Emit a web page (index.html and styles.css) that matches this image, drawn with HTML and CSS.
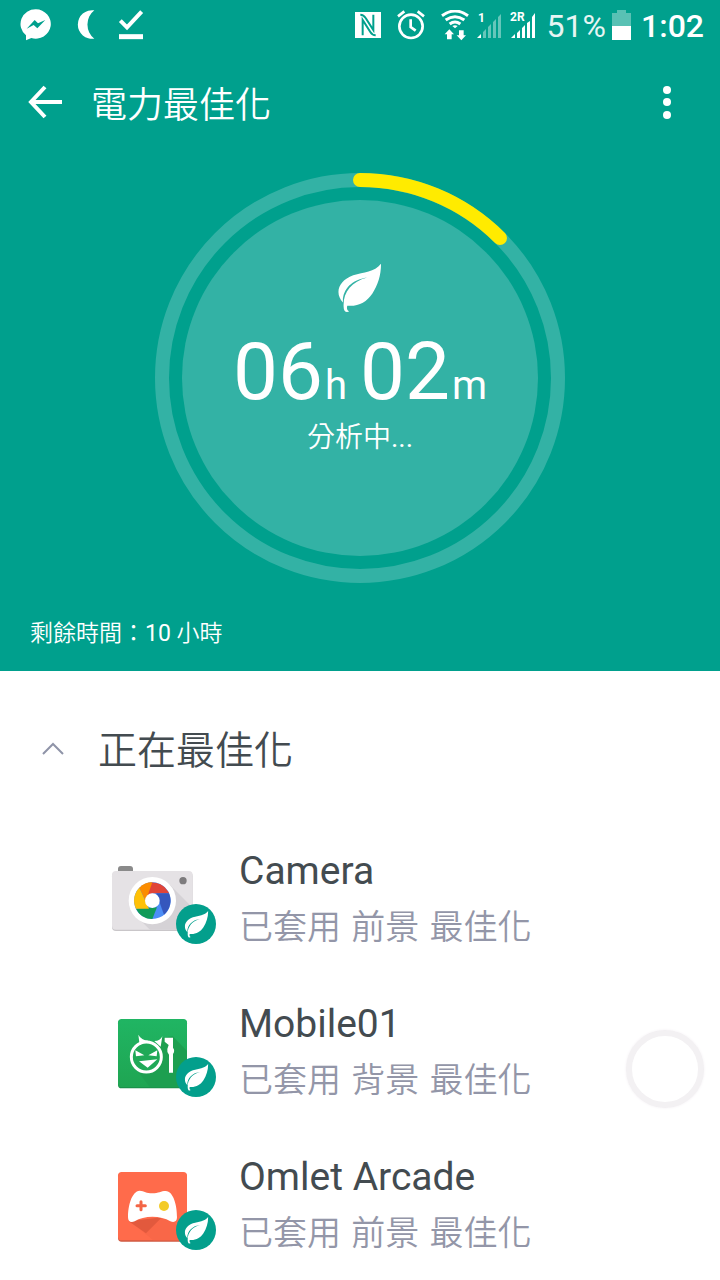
FILE: index.html
```html
<!DOCTYPE html>
<html lang="zh-Hant">
<head>
<meta charset="utf-8">
<meta name="viewport" content="width=device-width, initial-scale=1">
<title>電力最佳化</title>
<link rel="stylesheet" href="styles.css">
</head>
<body>
<svg class="defs" aria-hidden="true">
  <symbol id="leaf" viewBox="355 38 131 151">
    <path d="M484 40C464 66 432 65 400 75C355 91 343 130 369 157C367 119 394 89 442 82C394 95 369 127 371 169C371 184 379 190 388 184C381 181 380 176 382 167C415 170 440 157 458 130C474 104 484 76 484 40Z"/>
  </symbol>
  <symbol id="badge" viewBox="0 0 120 120">
    <circle cx="60" cy="60" r="60" fill="#039f8c"/>
    <use href="#leaf" x="25" y="20" width="74" height="82" fill="#fff"/>
  </symbol>
</svg>

<header class="hero">
  <div class="status">
    <div class="status-group notices">
      <svg width="32" height="32" viewBox="0 0 96 96" fill="#fff"><path d="M48 1A45 44 0 1 1 34 87L18 94V79A45 44 0 0 1 48 1Z"/><path d="M20 59L44 33L54 43L76 33L52 58L41 48Z" fill="#00a08d"/></svg>
      <svg width="20" height="30" viewBox="0 0 60 90" fill="#fff"><path d="M58 1A43 43 0 1 0 58 86A54 54 0 0 1 58 1Z"/></svg>
      <svg width="26" height="30" viewBox="0 0 78 90" fill="none" stroke="#fff"><path d="M7 32L27 52L71 5" stroke-width="12"/><path d="M3 80H75" stroke-width="15"/></svg>
    </div>
    <div class="status-group system">
      <svg width="26" height="26" viewBox="0 0 78 78"><path fill="#fff" d="M0 0H78V78H0Z"/><path d="M23 70V24L46 60Q52 70 62 70M55 8V54L32 18Q26 8 16 8" fill="none" stroke="#00a08d" stroke-width="6"/></svg>
      <svg class="alarm" width="28" height="30" viewBox="0 0 84 90" fill="none" stroke="#fff" stroke-width="8"><circle cx="42" cy="49" r="35"/><path d="M41 28V51L56 62M3 19L22 4M62 4L81 19"/></svg>
      <svg class="wifi" width="28" height="31" viewBox="0 0 84 93" fill="none" stroke="#fff" stroke-width="9"><path d="M3 17Q42-11 81 17M14 30Q42 10 70 30M26 42Q42 30 58 42"/><path d="M34 48Q42 43 50 48L42 55ZM25 58L39 73H32V88H18V73H11ZM61 91L47 76H54V61H68V76H75Z" fill="#fff" stroke="none"/></svg>
      <svg class="signal" width="26" height="30" viewBox="0 0 26 30" fill="#fff"><text class="sim" x="2" y="12">1</text><path d="M1 28L5 24V28Z"/><path opacity=".4" d="M7 22L10 19V28H7ZM12 17L15 14V28H12ZM17 12L20 9V28H17ZM22 7L25 4V28H22Z"/></svg>
      <svg class="signal two" width="28" height="30" viewBox="0 0 28 30" fill="#fff"><text class="sim" x="0" y="11">2R</text><path d="M1 28L5 24V28ZM7 23L10 20V28H7ZM12 18L15 15V28H12ZM17 13L20 11V28H17ZM22 7L25 3V28H22Z"/></svg>
      <span class="percent">51%</span>
      <svg width="19" height="30" viewBox="0 0 19 30" fill="#fff"><path opacity=".35" d="M0 3H5V0H14V3H19V16H0Z"/><path d="M0 16H19V30H0Z"/></svg>
      <time class="clock">1:02</time>
    </div>
  </div>

  <nav class="appbar">
    <button class="icon-button" aria-label="返回"><svg width="36" height="36" viewBox="0 0 36 36" fill="none" stroke="#fff" stroke-width="4"><path d="M18 3L4 18L18 33M4 18H35"/></svg></button>
    <h1>電力最佳化</h1>
    <button class="icon-button" aria-label="更多選項"><svg width="12" height="36" viewBox="0 0 12 36" fill="#fff"><circle cx="6" cy="6" r="4"/><circle cx="6" cy="18" r="4"/><circle cx="6" cy="31" r="4"/></svg></button>
  </nav>

  <section class="gauge">
    <svg class="ring" width="410" height="410" viewBox="0 0 410 410" fill="none">
      <circle cx="205" cy="205" r="198" stroke="#33b2a5" stroke-width="14"/>
      <circle cx="205" cy="205" r="178" fill="#33b2a5"/>
      <path d="M205 7A198 198 0 0 1 345 65" stroke="#ffeb00" stroke-width="14" stroke-linecap="round"/>
    </svg>
    <div class="reading">
      <svg class="leaf" width="44" height="50" fill="#fff"><use href="#leaf"/></svg>
      <p class="duration"><span>06</span><small>h</small><span class="minutes">02</span><small>m</small></p>
      <p class="state">分析中<span class="latin">...</span></p>
    </div>
  </section>
  <p class="remaining">剩餘時間：<span class="latin">10</span> 小時</p>
</header>

<main class="content">
  <h2><button class="group-toggle" aria-expanded="true">
    <svg width="22" height="18" viewBox="0 0 22 18" fill="none" stroke="#8f94a8" stroke-width="2"><path d="M1 12L11 2L21 12"/></svg>
    <span>正在最佳化</span>
  </button></h2>
  <ul class="apps">
    <li class="app">
      <svg width="130" height="110" viewBox="0 0 390 330">
        <path d="M54 66V57Q54 48 63 48H90Q99 48 99 57V66Z" fill="#8a8a8a"/>
        <rect x="36" y="67" width="242" height="176" rx="12" fill="#c9c6c9"/>
        <rect x="36" y="63" width="242" height="176" rx="12" fill="#e5e2e5"/>
        <path d="M205 100L278 173V239H150L110 200Z" fill="#d5d2d6"/>
        <circle cx="249" cy="92" r="11" fill="#7d7b7d"/>
        <circle cx="157" cy="152" r="71" fill="#fff"/>
        <g transform="translate(157 152)">
          <circle r="55" fill="#4c8df6"/>
          <path d="M-8-54A55 55 0 0 1 48-27L50-22H0L-25-10Z" fill="#e04438"/>
          <path d="M50-22A55 55 0 0 1 35 42L12-22Z" fill="#3557bd"/>
          <path d="M0 55A55 55 0 0 1-49 24L14 20Z" fill="#109b58"/>
          <path d="M-49 24A55 55 0 0 1-39-39L-10 24Z" fill="#ffc107"/>
          <path d="M-39-39A55 55 0 0 1 0-55L-20 2Z" fill="#fb8c00"/>
          <circle r="22" fill="#fff"/>
        </g>
        <use href="#badge" x="228" y="162" width="120" height="120"/>
      </svg>
      <div class="app-text"><h3>Camera</h3><p>已套用 <span class="mode">前景</span> 最佳化</p></div>
    </li>
    <li class="app">
      <svg width="130" height="110" viewBox="0 -6 390 330">
        <linearGradient id="green" x1="0" y1="0" x2="0" y2="1"><stop stop-color="#20b563"/><stop offset="1" stop-color="#1fa552"/></linearGradient>
        <rect x="54" y="44" width="207" height="206" rx="11" fill="#198b47"/>
        <rect x="54" y="42" width="207" height="205" rx="11" fill="url(#green)"/>
        <path d="M186 98L218 94L261 138V247H150L105 188Z" fill="#1d9f50"/>
        <circle cx="139" cy="156" r="45" fill="#1fa957" stroke="#fff" stroke-width="9"/>
        <path d="M115 89Q124 106 145 107L119 120ZM187 94Q181 108 163 108L182 125ZM106 136L133 151L108 154ZM172 136L145 151L170 154ZM117 169L172 163L143 188Z" fill="#fff"/>
        <path d="M194 98H219V128Q226 137 219 147V203H207V149Q200 142 202 132L206 120L194 110Z" fill="#fff"/>
        <use href="#badge" x="228" y="156" width="120" height="120"/>
      </svg>
      <div class="app-text"><h3>Mobile01</h3><p>已套用 <span class="mode">背景</span> 最佳化</p></div>
    </li>
    <li class="app">
      <svg width="130" height="110" viewBox="0 -12 390 330">
        <rect x="54" y="39" width="207" height="206" rx="11" fill="#cf5a42"/>
        <rect x="54" y="36" width="207" height="205" rx="11" fill="#ff6b4b"/>
        <path d="M86 180L138 219L190 170L220 185L261 226V241H160Z" fill="#f96748"/>
        <path d="M86 184L138 220L186 172Z" fill="#e2593d"/>
        <path d="M119 92C133 93 139 100 157 100C176 100 183 93 197 93C221 94 231 137 231 172C231 184 223 189 211 184C182 166 132 166 104 184C92 190 84 184 84 172C84 137 95 94 119 92Z" fill="#fff"/>
        <path d="M123 125V149M111 137H136" stroke="#f36545" stroke-width="9" stroke-linecap="round"/>
        <circle cx="192" cy="138" r="15" fill="#f3cb28"/>
        <use href="#badge" x="228" y="150" width="120" height="120"/>
      </svg>
      <div class="app-text"><h3>Omlet Arcade</h3><p>已套用 <span class="mode">前景</span> 最佳化</p></div>
    </li>
  </ul>
</main>
<button class="assist" aria-label="輔助按鈕"></button>
</body>
</html>
```
FILE: styles.css
```css
* { box-sizing: border-box; }

body {
  margin: 0;
  min-height: 100vh;
  background: #fff;
  color: #434b50;
  font-family: Roboto, "Noto Sans CJK TC", sans-serif;
}

h1, h2, h3, p, ul { margin: 0; padding: 0; font-weight: 400; }
ul { list-style: none; }
svg { display: block; flex: none; }
button { border: 0; padding: 0; background: none; color: inherit; font: inherit; }
.defs { position: absolute; width: 0; height: 0; }
.latin { font-weight: 400; }

.hero { background: #00a08d; color: #fff; padding-bottom: 19px; }

.status {
  display: flex;
  justify-content: space-between;
  height: 50px;
  padding: 0 16px 0 20px;
}
.status-group { display: flex; align-items: center; }
.notices { gap: 23px; }
.system { font-size: 32px; line-height: 50px; }
.alarm { margin-left: 16px; }
.wifi { margin-left: 16px; }
.signal { margin-left: 7px; }
.signal.two { margin-left: 8px; }
.sim { font: 700 12px Roboto, sans-serif; }
.percent { margin: 2px 6px 0 9px; opacity: .9; }
.clock { margin: 2px 0 0 10px; font-weight: 500; }

.appbar {
  display: flex;
  align-items: center;
  height: 104px;
  padding: 0 47px 0 27px;
}
.appbar h1 {
  flex: 1;
  margin-left: 28px;
  padding-top: 8px;
  font-size: 36px;
  font-weight: 350;
  line-height: 52px;
}

.gauge {
  display: grid;
  justify-items: center;
  margin-top: 19px;
}
.ring, .reading { grid-area: 1 / 1; }
.reading {
  display: flex;
  flex-direction: column;
  align-items: center;
  padding-top: 90px;
}
.duration {
  display: flex;
  align-items: baseline;
  margin-top: 23px;
  font-size: 80px;
  line-height: 72px;
}
.duration small { margin-left: 2px; font-size: 40px; }
.minutes { margin-left: 13px; }
.state { font-size: 28px; font-weight: 350; line-height: 32px; }

.remaining {
  margin-top: 33px;
  padding: 0 30px;
  font-size: 23px;
  font-weight: 350;
  line-height: 36px;
}

.content { padding: 53px 42px 12px; }
.group-toggle {
  display: flex;
  align-items: center;
  gap: 34px;
  width: 100%;
  font-size: 39px;
  font-weight: 350;
  line-height: 54px;
  text-align: left;
}
.apps {
  display: grid;
  gap: 36px;
  margin-top: 65px;
  padding-left: 58px;
}
.app { display: flex; align-items: flex-start; gap: 9px; }
.app > svg { margin-top: 7px; }
.app h3 { font-size: 39px; line-height: 56px; }
.app p {
  color: #9396a8;
  font-size: 34px;
  font-weight: 350;
  line-height: 56px;
}
.mode { margin: 0 2px; }

.assist {
  position: fixed;
  right: 16px;
  bottom: 172px;
  width: 78px;
  height: 78px;
  border: 6px solid #f3f1f3;
  border-radius: 50%;
  background: #fff;
  box-shadow: 0 0 3px #f3eff3;
}
```
